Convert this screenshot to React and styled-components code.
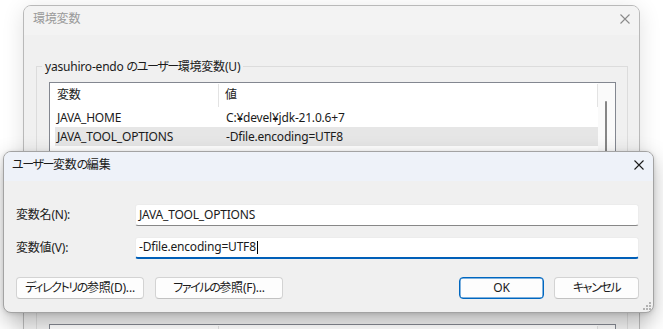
import React from "react";
import styled, { createGlobalStyle } from "styled-components";

const Global = createGlobalStyle`
  html, body { margin: 0; padding: 0; background: #ffffff; }
  body {
    font-family: "Noto Sans", "Noto Sans CJK JP", sans-serif;
    font-size: 12px;
    letter-spacing: -0.2px;
    font-feature-settings: "palt";
    color: #1b1b1b;
  }
  * { box-sizing: border-box; }
`;

const Desktop = styled.div`
  position: relative;
  width: 663px;
  height: 329px;
  overflow: hidden;
  background: #ffffff;
`;

const Window = styled.div`
  position: absolute;
  left: ${(p) => p.$left}px;
  top: ${(p) => p.$top}px;
  width: ${(p) => p.$width}px;
  height: ${(p) => p.$height}px;
  display: flex;
  flex-direction: column;
  background: #f0f0f0;
  border: 1px solid ${(p) => (p.$active ? "#a3a3a3" : "#b9b9b9")};
  border-radius: 8px;
  overflow: hidden;
  box-shadow: ${(p) =>
    p.$active
      ? "0 8px 22px rgba(0,0,0,0.26), 0 1px 4px rgba(0,0,0,0.12)"
      : "0 4px 22px rgba(0,0,0,0.12)"};
`;

const TitleBar = styled.div`
  flex: 0 0 29px;
  display: flex;
  align-items: center;
  justify-content: space-between;
  padding: 0 9px 3px ${(p) => (p.$active ? 8 : 9)}px;
  background: ${(p) => (p.$active ? "#eef2f9" : "#f3f3f3")};
`;

const Title = styled.span`
  line-height: 16px;
  color: ${(p) => (p.$active ? "#1b1b1b" : "#9a9a9a")};
`;

/* kana runs: the Windows UI font sets kana narrower than kanji */
const Kana = styled.span`
  letter-spacing: -1.4px;
`;

const CloseButton = styled.span`
  display: flex;
  width: 10px;
  height: 10px;
`;

const CloseIcon = ({ color }) => (
  <svg width="10" height="10" viewBox="0 0 10 10">
    <path d="M0.5 0.5 L9.5 9.5 M9.5 0.5 L0.5 9.5" stroke={color} strokeWidth="1.1" fill="none" />
  </svg>
);

const WindowBody = styled.div`
  flex: 1;
  padding: 31px 11px 0 12px;
`;

const Group = styled.div`
  position: relative;
  border: 1px solid #dcdcdc;
  border-bottom: none;
  padding: 15px 11px 0 12px;
  height: 100%;
`;

const GroupLabel = styled.span`
  position: absolute;
  top: -8px;
  left: 5px;
  padding: 0 3px;
  line-height: 16px;
  background: #f0f0f0;
`;

const ListView = styled.div`
  display: flex;
  height: ${(p) => p.$height}px;
  margin-top: ${(p) => p.$gap || 0}px;
  border: 1px solid #838790;
  background: #ffffff;
`;

const ListArea = styled.div`
  flex: 1;
  padding-left: 5px;
`;

const HeaderRow = styled.div`
  display: grid;
  grid-template-columns: 164px 1fr;
  height: 25px;
  padding: 1px 0;
`;

const HeaderCell = styled.div`
  display: flex;
  align-items: center;
  padding: 0 0 1px ${(p) => (p.$first ? 2 : 6)}px;
  border-right: 1px solid #e3e3e3;
  line-height: 16px;
`;

const Row = styled.div`
  display: grid;
  grid-template-columns: 164px 1fr;
  height: 19px;
  align-items: center;
  background: ${(p) => (p.$selected ? "#e6e6e6" : "transparent")};
`;

const Cell = styled.span`
  padding-left: ${(p) => (p.$first ? 2 : 7)}px;
  line-height: 16px;
  white-space: nowrap;
`;

const ScrollTrack = styled.div`
  flex: 0 0 17px;
  position: relative;
  background: #fafafa;
  padding: 18px 0 0 7px;
`;

const Thumb = styled.div`
  width: 2px;
  height: 180px;
  background: #868686;
  border-radius: 1px;
`;

const DialogBody = styled.div`
  flex: 1;
  display: flex;
  flex-direction: column;
  padding: 23px 14px 13px 12px;
`;

const Form = styled.div`
  display: grid;
  grid-template-columns: 119px 1fr;
  grid-auto-rows: 22px;
  row-gap: 11px;
  align-items: center;
`;

const Label = styled.span`
  line-height: 16px;
  padding-bottom: 1px;
`;

const Field = styled.div`
  height: 22px;
  display: flex;
  align-items: center;
  padding: 0 3px 1px;
  background: #ffffff;
  border: 1px solid #ececec;
  border-bottom: ${(p) => (p.$focused ? "2px solid #005fb8" : "1px solid #878787")};
  border-radius: 3px;
  line-height: 16px;
  white-space: nowrap;
`;

const Caret = styled.span`
  display: inline-block;
  width: 1px;
  height: 13px;
  background: #000;
  margin-left: 1px;
`;

const ButtonBar = styled.div`
  display: flex;
  justify-content: space-between;
  margin-top: 18px;
`;

const ButtonGroup = styled.div`
  display: flex;
  gap: ${(p) => p.$gap}px;
`;

const Button = styled.div`
  width: ${(p) => p.$width}px;
  height: 22px;
  display: flex;
  align-items: center;
  justify-content: center;
  padding-bottom: 1px;
  background: #fdfdfd;
  border: 1px solid ${(p) => (p.$default ? "#0067c0" : "#d3d3d3")};
  border-bottom-color: ${(p) => (p.$default ? "#0067c0" : "#c2c2c2")};
  box-shadow: ${(p) => (p.$default ? "inset 0 0 0 0.5px #0067c0" : "none")};
  border-radius: 4px;
  line-height: 16px;
  white-space: nowrap;
`;

const SizeGrip = styled.svg`
  position: absolute;
  right: 2px;
  bottom: 2px;
`;

export default function App() {
  return (
    <>
      <Global />
      <Desktop>
        <Window $left={23} $top={5} $width={617} $height={400}>
          <TitleBar>
            <Title>環境変数</Title>
            <CloseButton>
              <CloseIcon color="#8a8a8a" />
            </CloseButton>
          </TitleBar>
          <WindowBody>
            <Group>
              <GroupLabel>
                yasuhiro-endo <Kana>のユーザー</Kana>環境変数(U)
              </GroupLabel>
              <ListView $height={218}>
                <ListArea>
                  <HeaderRow>
                    <HeaderCell $first>変数</HeaderCell>
                    <HeaderCell>値</HeaderCell>
                  </HeaderRow>
                  <Row>
                    <Cell $first>JAVA_HOME</Cell>
                    <Cell>C:¥devel¥jdk-21.0.6+7</Cell>
                  </Row>
                  <Row $selected>
                    <Cell $first>JAVA_TOOL_OPTIONS</Cell>
                    <Cell>-Dfile.encoding=UTF8</Cell>
                  </Row>
                </ListArea>
                <ScrollTrack>
                  <Thumb />
                </ScrollTrack>
              </ListView>
              <ListView $height={120} $gap={24}>
                <ListArea>
                  <HeaderRow>
                    <HeaderCell $first />
                    <HeaderCell />
                  </HeaderRow>
                </ListArea>
                <ScrollTrack>
                  <Thumb />
                </ScrollTrack>
              </ListView>
            </Group>
          </WindowBody>
        </Window>

        <Window $active $left={3} $top={151} $width={651} $height={162}>
          <TitleBar $active>
            <Title $active>
              <Kana>ユーザー</Kana>変数<Kana>の</Kana>編集
            </Title>
            <CloseButton>
              <CloseIcon color="#1b1b1b" />
            </CloseButton>
          </TitleBar>
          <DialogBody>
            <Form>
              <Label>変数名(N):</Label>
              <Field>JAVA_TOOL_OPTIONS</Field>
              <Label>変数値(V):</Label>
              <Field $focused>
                -Dfile.encoding=UTF8
                <Caret />
              </Field>
            </Form>
            <ButtonBar>
              <ButtonGroup $gap={11}>
                <Button $width={128}>
                  <Kana>ディレクトリの</Kana>参照(D)...
                </Button>
                <Button $width={128}>
                  <Kana>ファイルの</Kana>参照(F)...
                </Button>
              </ButtonGroup>
              <ButtonGroup $gap={10}>
                <Button $width={85} $default>OK</Button>
                <Button $width={85}>
                  <Kana>キャンセル</Kana>
                </Button>
              </ButtonGroup>
            </ButtonBar>
          </DialogBody>
          <SizeGrip width="9" height="9" viewBox="0 0 9 9">
            <g fill="#b3b3b3">
              <rect x="7" y="1" width="2" height="2" />
              <rect x="4" y="4" width="2" height="2" />
              <rect x="7" y="4" width="2" height="2" />
              <rect x="1" y="7" width="2" height="2" />
              <rect x="4" y="7" width="2" height="2" />
              <rect x="7" y="7" width="2" height="2" />
            </g>
          </SizeGrip>
        </Window>
      </Desktop>
    </>
  );
}
